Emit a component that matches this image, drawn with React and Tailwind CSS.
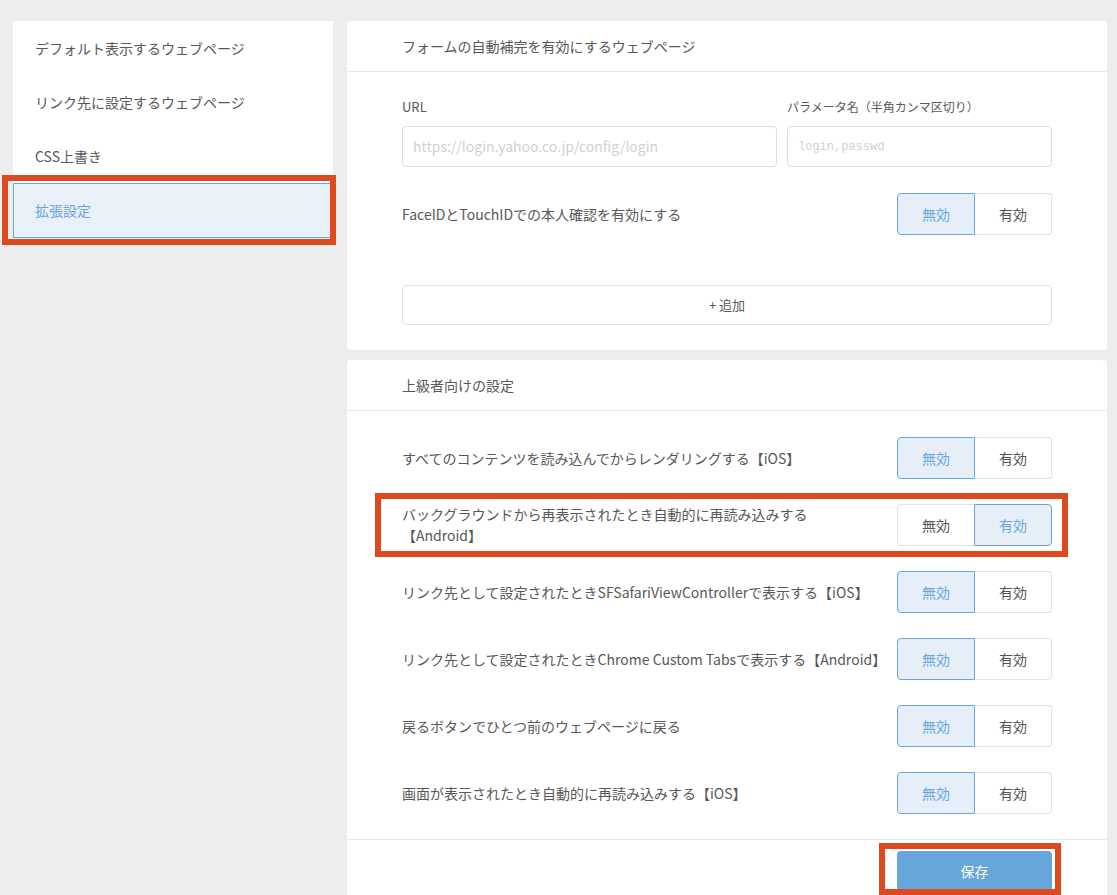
const FONT = { fontFamily: '"Noto Sans CJK JP", "Noto Sans", sans-serif' };

const sideItems = ['デフォルト表示するウェブページ', 'リンク先に設定するウェブページ', 'CSS上書き'];

const advanced = [
  { label: ['すべてのコンテンツを読み込んでからレンダリングする【iOS】'], on: false },
  { label: ['バックグラウンドから再表示されたとき自動的に再読み込みする', '【Android】'], on: true, mark: true },
  { label: ['リンク先として設定されたときSFSafariViewControllerで表示する【iOS】'], on: false },
  { label: ['リンク先として設定されたときChrome Custom Tabsで表示する【Android】'], on: false },
  { label: ['戻るボタンでひとつ前のウェブページに戻る'], on: false },
  { label: ['画面が表示されたとき自動的に再読み込みする【iOS】'], on: false },
];

const Toggle = ({ on }) => (
  <div className="flex h-[42px] w-[155px] shrink-0 text-[14px]">
    <div
      className={
        on
          ? 'flex-1 flex items-center justify-center rounded-l-[4px] border border-r-0 border-[#e0e2e7] bg-white text-[#555]'
          : 'flex-1 flex items-center justify-center rounded-l-[4px] border border-[#6aa6dc] bg-[#e6eff8] text-[#6aa6dc]'
      }
    >
      無効
    </div>
    <div
      className={
        on
          ? 'flex-1 flex items-center justify-center rounded-r-[4px] border border-[#6aa6dc] bg-[#e6eff8] text-[#6aa6dc]'
          : 'flex-1 flex items-center justify-center rounded-r-[4px] border border-l-0 border-[#e0e2e7] bg-white text-[#555]'
      }
    >
      有効
    </div>
  </div>
);

const Mark = ({ className }) => (
  <div className={'pointer-events-none absolute border-[6px] border-[#dd4a20] ' + className} />
);

export default function App() {
  return (
    <div className="h-screen overflow-hidden bg-[#ededed] text-[#585858]" style={FONT}>
      <div className="flex items-start gap-[14px] pl-[13px] pr-[10px] pt-[21px]">
        {/* sidebar */}
        <div className="w-[320px] shrink-0 bg-white text-[14px]">
          {sideItems.map((s) => (
            <div key={s} className="flex h-[54px] items-center pl-[22px]">
              {s}
            </div>
          ))}
          <div className="relative flex h-[55px] items-center border border-[#6aa6dc] bg-[#e8f0f8] pl-[21px] text-[#6aa6dc]">
            拡張設定
            <Mark className="-left-[12px] -right-[4px] -top-[9px] -bottom-[8px]" />
          </div>
        </div>

        {/* main */}
        <div className="flex flex-1 flex-col gap-[10px]">
          <div className="rounded-[4px] bg-white">
            <div className="flex h-[51px] items-center border-b border-[#e8e8e8] pl-[55px] text-[14px]">
              フォームの自動補完を有効にするウェブページ
            </div>
            <div className="px-[55px] pt-[25px] pb-[25px]">
              <div className="flex gap-[10px]">
                <div className="flex-1">
                  <div className="mb-[9px] h-[20px] text-[13px] leading-[20px]">URL</div>
                  <div className="flex h-[41px] items-center rounded-[4px] border border-[#dcdee4] pl-[10px] text-[14px] text-[#cdd1d8]">
                    https://login.yahoo.co.jp/config/login
                  </div>
                </div>
                <div className="w-[265px]">
                  <div className="mb-[9px] h-[20px] text-[12px] leading-[20px]">パラメータ名（半角カンマ区切り）</div>
                  <div
                    className="flex h-[41px] items-center rounded-[4px] border border-[#dcdee4] pl-[10px] text-[12px] text-[#cdd1d8]"
                    style={{ fontFamily: '"Liberation Mono", monospace' }}
                  >
                    login,passwd
                  </div>
                </div>
              </div>
              <div className="mt-[26px] flex items-center justify-between">
                <div className="text-[14px]">FaceIDとTouchIDでの本人確認を有効にする</div>
                <Toggle on={false} />
              </div>
              <div className="mt-[50px] flex h-[40px] items-center justify-center rounded-[4px] border border-[#e0e0e0] text-[13px]">
                + 追加
              </div>
            </div>
          </div>

          <div className="rounded-[4px] bg-white">
            <div className="flex h-[51px] items-center border-b border-[#e8e8e8] pl-[55px] text-[14px]">
              上級者向けの設定
            </div>
            <div className="flex flex-col gap-[25px] px-[55px] pt-[26px] pb-[25px]">
              {advanced.map((r) => (
                <div key={r.label[0]} className="relative flex items-center">
                  <div className="flex-1 pr-[15px] text-[14px] leading-[21px]">
                    {r.label.map((l) => (
                      <div key={l}>{l}</div>
                    ))}
                  </div>
                  <Toggle on={r.on} />
                  {r.mark && <Mark className="-left-[27px] -right-[16px] -top-[11px] -bottom-[11px]" />}
                </div>
              ))}
            </div>
            <div className="flex justify-end border-t border-[#e8e8e8] px-[55px] pt-[11px] pb-[12px]">
              <div className="relative flex h-[40px] w-[155px] items-center justify-center rounded-[4px] bg-[#66a6da] text-[14px] text-white">
                保存
                <Mark className="-left-[18px] -right-[9px] -top-[8px] -bottom-[4px]" />
              </div>
            </div>
          </div>
        </div>
      </div>
    </div>
  );
}
